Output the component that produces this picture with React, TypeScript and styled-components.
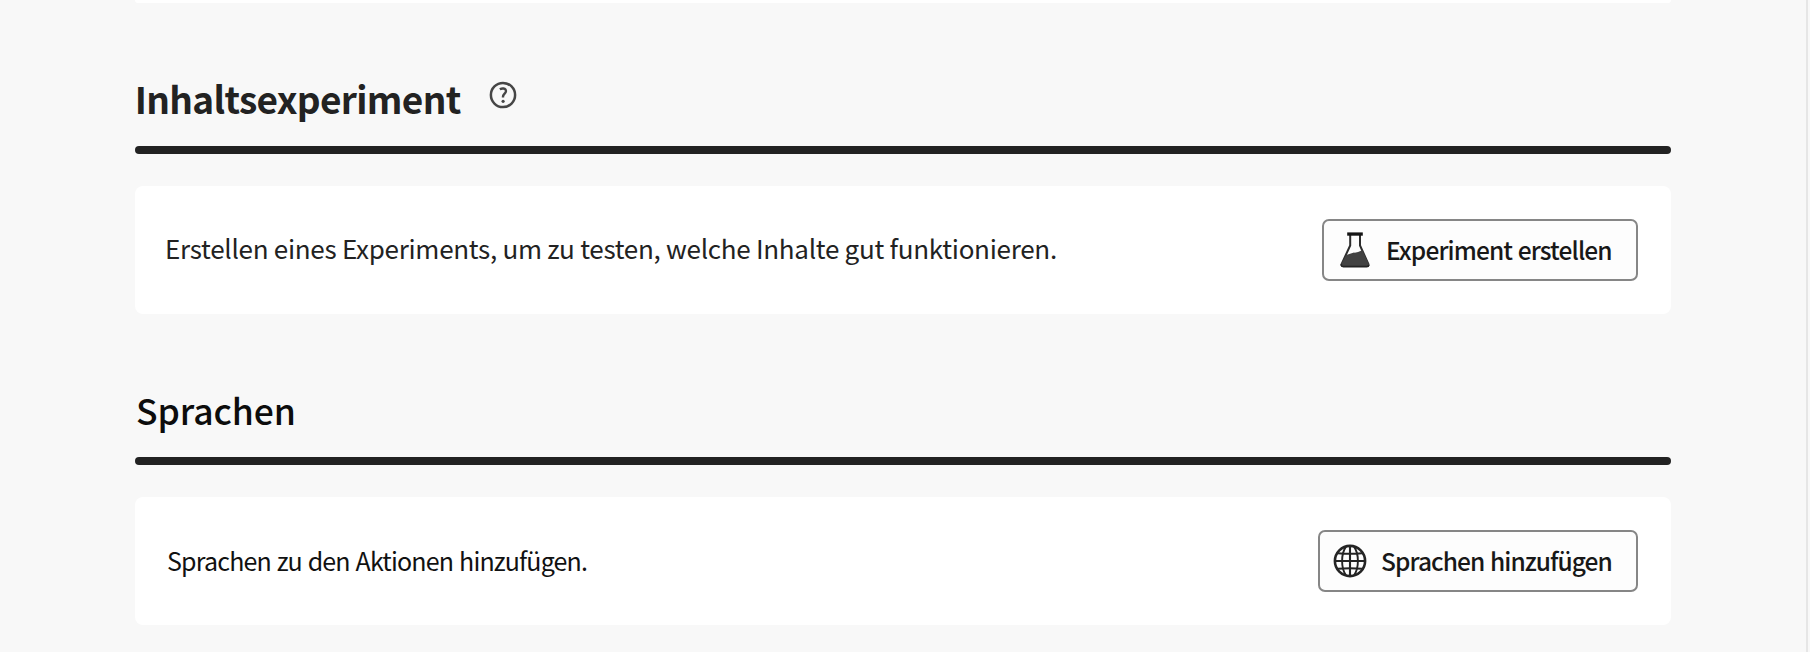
import React from 'react';
import styled, { createGlobalStyle } from 'styled-components';

const GlobalStyle = createGlobalStyle`
  * { box-sizing: border-box; }
  html { background: #f8f8f8; overflow: hidden; }
  body {
    margin: 0;
    font-family: "Noto Sans CJK SC", "Source Sans Pro", "Noto Sans", sans-serif;
    color: #222;
  }
`;

const Page = styled.div`
  display: flex;
  height: 652px;
  background: #f8f8f8;
`;

const Content = styled.main`
  width: 1806px;
  padding: 0 135px;
`;

const ScrollEdge = styled.div`
  width: 2px;
  background: #e6e6e6;
`;

const PreviousCard = styled.div`
  width: 1536px;
  height: 3px;
  margin-bottom: 65px;
  background: #fff;
  border-radius: 0 0 8px 8px;
`;

const Section = styled.section`
  width: 1536px;
  margin-bottom: 65px;
`;

const SectionHeader = styled.header`
  display: flex;
  align-items: center;
  height: 60px;
  margin-bottom: 18px;
`;

const Heading = styled.h2<{ $size: number; $weight: number; $tracking: number; $offset: number; $drop: number; $color: string }>`
  margin: 0 0 0 ${p => p.$offset}px;
  padding-top: ${p => p.$drop}px;
  font-size: ${p => p.$size}px;
  font-weight: ${p => p.$weight};
  letter-spacing: ${p => p.$tracking}px;
  line-height: 60px;
  white-space: nowrap;
  color: ${p => p.$color};
`;

const HelpButton = styled.button`
  display: flex;
  margin: 0 0 6px 28.5px;
  padding: 0;
  border: 0;
  background: none;
  color: #464646;
`;

const Rule = styled.div`
  height: 8px;
  margin-bottom: 32px;
  border-radius: 4px;
  background: #222;
`;

const Card = styled.div`
  display: flex;
  align-items: center;
  justify-content: space-between;
  height: 128px;
  padding: 0 33px 0 30px;
  border-radius: 8px;
  background: #fff;
`;

const Description = styled.p<{ $size: number; $tracking: number; $wordGap: number; $indent: number; $lift: number; $color: string }>`
  margin: 0;
  padding: 0 0 ${p => p.$lift}px ${p => p.$indent}px;
  font-size: ${p => p.$size}px;
  letter-spacing: ${p => p.$tracking}px;
  word-spacing: ${p => p.$wordGap}px;
  line-height: 36px;
  white-space: nowrap;
  color: ${p => p.$color};
`;

const ActionButton = styled.button<{ $width: number; $inset: number; $gap: number; $tracking: number }>`
  display: flex;
  align-items: center;
  gap: ${p => p.$gap}px;
  width: ${p => p.$width}px;
  height: 62px;
  padding: 0 0 0 ${p => p.$inset}px;
  border: 2px solid #868686;
  border-radius: 7px;
  background: #fdfdfd;
  color: #181818;
  font-family: inherit;
  font-size: 24.5px;
  font-weight: 500;
  letter-spacing: ${p => p.$tracking}px;
  word-spacing: 1px;
  line-height: 36px;
  white-space: nowrap;
`;

const ActionLabel = styled.span`
  padding-bottom: 1px;
`;

const HelpIcon = () => (
  <svg width="28" height="28" viewBox="0 0 28 28" fill="none" stroke="currentColor">
    <circle cx="14" cy="14" r="12.1" strokeWidth="2.5" />
    <path d="M10.8 8.2C12.2 7.5 13.4 7.3 14.5 7.5C16.3 7.8 17.2 9 16.9 10.6C16.6 12.5 13.9 13.2 14 15.8V16.6" strokeWidth="2.4" />
    <circle cx="14.1" cy="20.3" r="1.6" fill="currentColor" stroke="none" />
  </svg>
);

const FlaskIcon = () => (
  <svg width="30" height="36" viewBox="0 0 30 36">
    <path d="M10.2 3V13.5L1.6 32Q1 34 3 34H27Q29 34 28.4 32L20 13.5V3" fill="none" stroke="#2c2c2c" strokeWidth="2" />
    <path d="M6.2 23L14 20.6Q17 21 22.3 18.2L28.8 32Q29.4 34.7 27 34.7H3Q.6 34.7 1.2 32Z" fill="#414141" />
    <path d="M1.3 32.2V33Q1.5 34.6 3.3 34.6H26.7Q28.5 34.6 28.8 33" fill="none" stroke="#222" strokeWidth="1.6" />
    <path d="M7.2 .4H22.8V3.7H7.2Z" fill="#151515" />
  </svg>
);

const GlobeIcon = () => (
  <svg width="34" height="34" viewBox="0 0 34 34" fill="none" stroke="#242424">
    <circle cx="17" cy="17" r="15.1" strokeWidth="2.6" />
    <path d="M17 2V32M2 17H32" strokeWidth="2.1" />
    <path d="M5 9.2Q17 10.4 29 9.2M5 24.8Q17 23.6 29 24.8" strokeWidth="1.9" />
    <path d="M13 2.6C7.8 10 7.8 24 13 31.4M21 2.6C26.2 10 26.2 24 21 31.4" strokeWidth="1.9" />
  </svg>
);

export default function App() {
  return (
    <>
      <GlobalStyle />
      <Page>
        <Content>
          <PreviousCard />
          <Section>
            <SectionHeader>
              <Heading $size={37} $weight={700} $tracking={-0.68} $offset={-0.3} $drop={0} $color="#222">Inhaltsexperiment</Heading>
              <HelpButton aria-label="Hilfe"><HelpIcon /></HelpButton>
            </SectionHeader>
            <Rule />
            <Card>
              <Description $size={26} $tracking={-0.28} $wordGap={0} $indent={-0} $lift={5} $color="#222">
                Erstellen eines Experiments, um zu testen, welche Inhalte gut funktionieren.
              </Description>
              <ActionButton $width={316} $inset={16} $gap={16} $tracking={-0.88}>
                <FlaskIcon />
                <ActionLabel>Experiment erstellen</ActionLabel>
              </ActionButton>
            </Card>
          </Section>
          <Section>
            <SectionHeader>
              <Heading $size={35.5} $weight={500} $tracking={-0.08} $offset={1} $drop={2} $color="#0c0c0c">Sprachen</Heading>
            </SectionHeader>
            <Rule />
            <Card>
              <Description $size={25} $tracking={-0.82} $wordGap={1} $indent={2} $lift={2} $color="#111">
                Sprachen zu den Aktionen hinzufügen.
              </Description>
              <ActionButton $width={320} $inset={13} $gap={14} $tracking={-0.92}>
                <GlobeIcon />
                <ActionLabel>Sprachen hinzufügen</ActionLabel>
              </ActionButton>
            </Card>
          </Section>
        </Content>
        <ScrollEdge />
      </Page>
    </>
  );
}
